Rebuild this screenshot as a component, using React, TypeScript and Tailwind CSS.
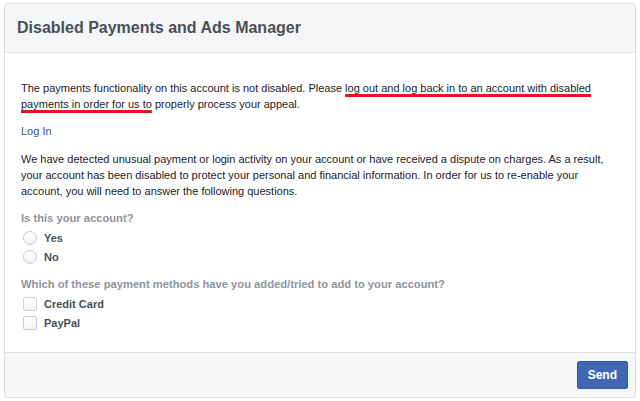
import React, { useState } from "react";

const font = { fontFamily: '"Liberation Sans", Arial, Helvetica, sans-serif' };

const Radio: React.FC<{ label: string; checked: boolean; onSelect: () => void }> = ({ label, checked, onSelect }) => (
  <label className="flex items-center h-[19px] ml-[2px] cursor-pointer" onClick={onSelect}>
    <span className="w-[14px] h-[14px] rounded-full border border-[#c9ccd1] bg-gradient-to-b from-white to-[#f2f3f5] flex items-center justify-center">
      {checked && <span className="w-[6px] h-[6px] rounded-full bg-[#4267b2]" />}
    </span>
    <span className="ml-[7px] text-[11px] font-bold text-[#4b4f56]">{label}</span>
  </label>
);

const Check: React.FC<{ label: string; checked: boolean; onToggle: () => void }> = ({ label, checked, onToggle }) => (
  <label className="flex items-center h-[19px] ml-[2px] cursor-pointer" onClick={onToggle}>
    <span className="w-[14px] h-[14px] rounded-[2px] border border-[#c9ccd1] bg-gradient-to-b from-white to-[#f2f3f5] flex items-center justify-center text-[10px] text-[#4267b2]">
      {checked && "✓"}
    </span>
    <span className="ml-[7px] text-[11px] font-bold text-[#4b4f56]">{label}</span>
  </label>
);

export default function App() {
  const [mine, setMine] = useState<string | null>(null);
  const [methods, setMethods] = useState<string[]>([]);

  const toggle = (m: string) =>
    setMethods(prev => (prev.includes(m) ? prev.filter(x => x !== m) : [...prev, m]));

  return (
    <div className="w-[640px] h-[401px] bg-white pt-[3px] pl-[4px]" style={font}>
      <div className="w-[632px] h-[395px] border border-[#dddfe2] rounded-[3px] flex flex-col overflow-hidden">
        {/* Header */}
        <div className="h-[49px] bg-[#f5f6f7] border-b border-[#dddfe2] flex items-center pl-[12px] shrink-0">
          <h3 className="text-[16px] font-bold text-[#4b4f56]">Disabled Payments and Ads Manager</h3>
        </div>

        {/* Body */}
        <div className="flex-1 px-[16px] pt-[27px] text-[11px] leading-[16px] text-[#1d2129]">
          <p className="mb-[11px]">
            The payments functionality on this account is not disabled. Please{" "}
            <span className="underline decoration-[#e8131c] decoration-[2.5px] underline-offset-[2px]">
              log out and log back in to an account with disabled payments in order for us to
            </span>{" "}
            properly process your appeal.
          </p>
          <a href="#" className="block text-[#365899] mb-[12px]">Log In</a>
          <p className="mb-[11px]">
            We have detected unusual payment or login activity on your account or have received a dispute on charges. As a result,
            your account has been disabled to protect your personal and financial information. In order for us to re-enable your
            account, you will need to answer the following questions.
          </p>

          <p className="font-bold text-[#90949c] text-[11.2px] mb-[2px]">Is this your account?</p>
          <Radio label="Yes" checked={mine === "yes"} onSelect={() => setMine("yes")} />
          <Radio label="No" checked={mine === "no"} onSelect={() => setMine("no")} />

          <p className="font-bold text-[#90949c] text-[11.2px] mt-[10px] mb-[2px]">
            Which of these payment methods have you added/tried to add to your account?
          </p>
          <Check label="Credit Card" checked={methods.includes("cc")} onToggle={() => toggle("cc")} />
          <Check label="PayPal" checked={methods.includes("pp")} onToggle={() => toggle("pp")} />
        </div>

        {/* Footer */}
        <div className="h-[45px] bg-[#f5f6f7] border-t border-[#dddfe2] flex items-center justify-end pr-[7px] shrink-0">
          <button className="h-[28px] px-[10px] bg-[#4267b2] border border-[#3b5998] rounded-[2px] text-white text-[12px] font-bold">
            Send
          </button>
        </div>
      </div>
    </div>
  );
}
